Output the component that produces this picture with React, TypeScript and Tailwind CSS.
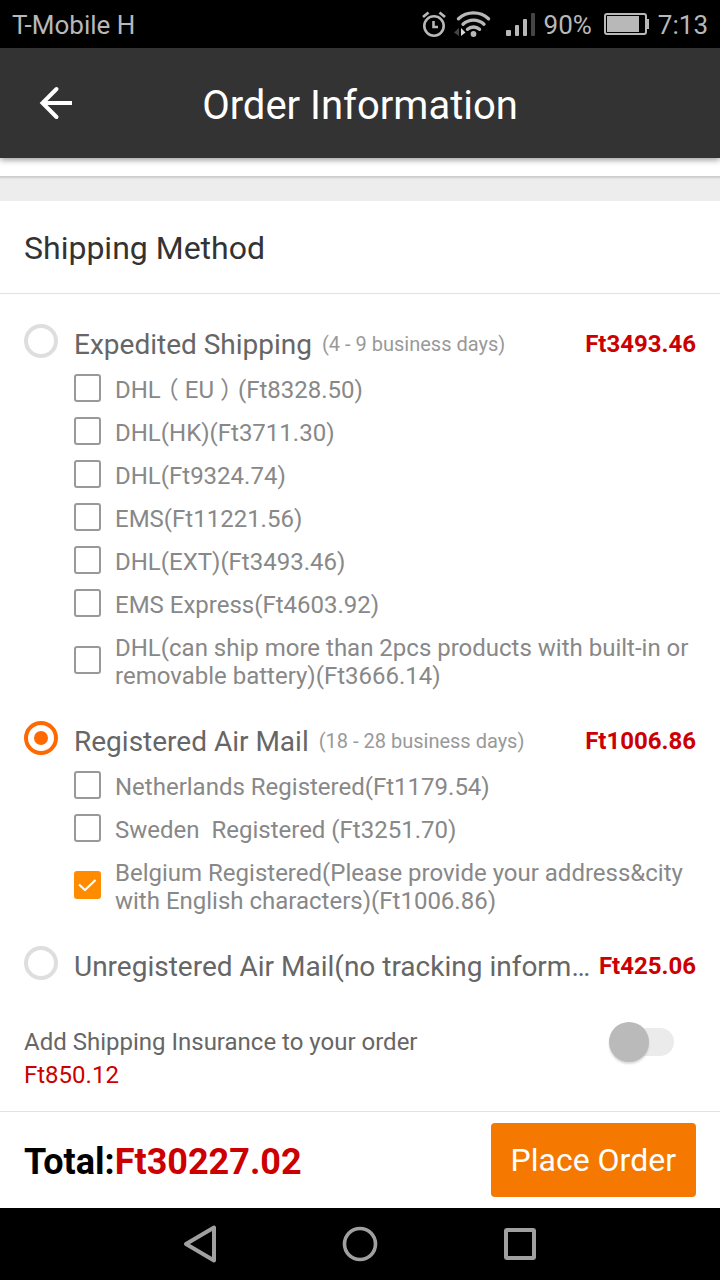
import React, { useState } from 'react';

interface Option {
  id: string;
  label: string;
}

interface Method {
  id: string;
  name: string;
  days?: string;
  price: string;
  options: Option[];
}

const methods: Method[] = [
  {
    id: 'expedited',
    name: 'Expedited Shipping',
    days: '(4 - 9 business days)',
    price: 'Ft3493.46',
    options: [
      { id: 'dhl-eu', label: 'DHL（EU）(Ft8328.50)' },
      { id: 'dhl-hk', label: 'DHL(HK)(Ft3711.30)' },
      { id: 'dhl', label: 'DHL(Ft9324.74)' },
      { id: 'ems', label: 'EMS(Ft11221.56)' },
      { id: 'dhl-ext', label: 'DHL(EXT)(Ft3493.46)' },
      { id: 'ems-express', label: 'EMS Express(Ft4603.92)' },
      {
        id: 'dhl-battery',
        label: 'DHL(can ship more than 2pcs products with built-in or removable battery)(Ft3666.14)',
      },
    ],
  },
  {
    id: 'registered',
    name: 'Registered Air Mail',
    days: '(18 - 28 business days)',
    price: 'Ft1006.86',
    options: [
      { id: 'netherlands', label: 'Netherlands Registered(Ft1179.54)' },
      { id: 'sweden', label: 'Sweden  Registered (Ft3251.70)' },
      {
        id: 'belgium',
        label: 'Belgium Registered(Please provide your address&city with English characters)(Ft1006.86)',
      },
    ],
  },
  {
    id: 'unregistered',
    name: 'Unregistered Air Mail(no tracking inform…',
    price: 'Ft425.06',
    options: [],
  },
];

// Full-width parentheses sit in the middle of their cell
const OptionLabel: React.FC<{ text: string }> = ({ text }) => (
  <>
    {text.split(/([（）])/).map((part, i) =>
      part === '（' || part === '）' ? (
        <span key={i} className="inline-block w-6 text-center [font-feature-settings:'halt']">
          {part}
        </span>
      ) : (
        part
      )
    )}
  </>
);

const StatusBar: React.FC = () => (
  <div className="flex h-12 items-center justify-between bg-black px-3 pt-[2px] text-[26px] leading-8 text-[#b8b8b8]">
    <span>T-Mobile H</span>
    <div className="flex items-center gap-2">
      {/* Alarm */}
      <svg className="-mt-[2px]" width="24" height="26" viewBox="0 0 24 26" fill="none" stroke="#b8b8b8">
        <circle cx="12" cy="15" r="9.7" strokeWidth="2.6" />
        <path d="M1 6 6.500 1.500M23 6 17.500 1.500" strokeWidth="2.8" />
        <path d="M11.5 10v6H16" strokeWidth="2.6" />
      </svg>
      {/* Wifi */}
      <svg className="-mt-[2px]" width="38" height="26" viewBox="0 0 38 26" fill="none">
        <path d="M4.500 7.800a22 22 0 0 1 30 0" stroke="#b8b8b8" strokeWidth="3.4" strokeLinecap="round" />
        <path d="M9 13.200a15.500 15.500 0 0 1 21 0" stroke="#b8b8b8" strokeWidth="3.4" strokeLinecap="round" />
        <path d="M13.500 18.300a9 9 0 0 1 12 0" stroke="#b8b8b8" strokeWidth="3.4" strokeLinecap="round" />
        <circle cx="19.500" cy="23" r="2.900" fill="#b8b8b8" />
        <path d="M0 21.500 5 17v8z" fill="#444" />
        <path d="M7 17l4.500 4.500L7 25z" fill="#d8d8d8" />
      </svg>
      {/* Signal */}
      <svg className="-mt-[2px] ml-[6px]" width="30" height="26" viewBox="0 0 30 26" fill="#b8b8b8">
        <rect x="0" y="19" width="5" height="6" rx="1" />
        <rect x="9" y="14" width="4" height="11" rx="1" />
        <rect x="17" y="8" width="4" height="17" rx="1" />
        <rect x="25" y="2" width="4" height="23" rx="1" fill="#444" />
      </svg>
      <span className="mr-1">90%</span>
      {/* Battery */}
      <svg className="-mt-[2px]" width="46" height="24" viewBox="0 0 46 24">
        <rect x="1" y="2" width="41" height="20" rx="2" fill="none" stroke="#b8b8b8" strokeWidth="2" />
        <rect x="3" y="4" width="32" height="16" fill="#b8b8b8" />
        <path d="M42 7h3v10h-3z" fill="#b8b8b8" />
      </svg>
      <span>7:13</span>
    </div>
  </div>
);

const NavBar: React.FC = () => (
  <nav className="flex h-18 items-center justify-center gap-31 bg-black">
    <button type="button" aria-label="Back">
      <svg width="36" height="40" viewBox="0 0 36 40" fill="none" stroke="#a0a0a0" strokeWidth="4" strokeLinejoin="round">
        <path d="M32 3.500v33L4 20z" />
      </svg>
    </button>
    <button type="button" aria-label="Home">
      <svg width="36" height="40" viewBox="0 0 36 40" fill="none" stroke="#a0a0a0" strokeWidth="3.600">
        <circle cx="18" cy="20" r="15.500" />
      </svg>
    </button>
    <button type="button" aria-label="Recent apps">
      <svg width="36" height="40" viewBox="0 0 36 40" fill="none" stroke="#a0a0a0" strokeWidth="4">
        <rect x="4" y="6" width="28" height="28" rx="1" />
      </svg>
    </button>
  </nav>
);

const App: React.FC = () => {
  const [method, setMethod] = useState('registered');
  const [checked, setChecked] = useState<string[]>(['belgium']);
  const [insurance, setInsurance] = useState(false);

  const toggle = (id: string) => {
    setChecked((prev) => (prev.includes(id) ? prev.filter((c) => c !== id) : [...prev, id]));
  };

  return (
    <div className="flex min-h-screen flex-col bg-white font-[Roboto,'Noto_Sans_CJK_SC',sans-serif]">
      <StatusBar />

      {/* Header */}
      <header className="relative z-10 grid h-[110px] grid-cols-[80px_1fr_80px] items-center bg-[#333] text-white shadow-[0_2px_6px_rgba(0,0,0,0.4)]">
        <button type="button" aria-label="Go back" className="pt-[2px] pl-9">
          <svg width="40" height="40" viewBox="0 0 40 40" fill="none" stroke="#fff" strokeWidth="4">
            <path d="M36 19H6" />
            <path d="M20.500 5 6.500 19l14 14" strokeLinecap="round" />
          </svg>
        </button>
        <h1 className="pt-[6px] text-center text-[40px] leading-12">Order Information</h1>
      </header>

      <div className="h-[18px]" />
      <div className="h-[25px] bg-[#ededed] shadow-[inset_0_3px_2px_-1px_rgba(0,0,0,0.14)]" />

      {/* Shipping methods */}
      <main className="flex-1">
        <h2 className="border-b border-[#e2e2e2] px-6 pt-[25px] pb-[23px] text-[32px] leading-11 text-[#333]">
          Shipping Method
        </h2>

        <div className="flex flex-col gap-[23px] px-6 pt-[30px]">
          {methods.map((m) => (
            <section key={m.id}>
              <div className="flex items-start">
                <input
                  id={m.id}
                  type="radio"
                  name="method"
                  checked={method === m.id}
                  onChange={() => setMethod(m.id)}
                  className="grid size-[34px] shrink-0 appearance-none place-content-center rounded-full border-4 border-[#dedede] before:size-[14px] before:rounded-full checked:border-[#ff6a00] checked:before:bg-[#ff6a00]"
                />
                <label htmlFor={m.id} className="ml-4 flex min-w-0 flex-1 items-start text-[28px] leading-10 text-[#666]">
                  <span className="truncate pt-px">{m.name}</span>
                  {m.days && <span className="ml-[10px] shrink-0 text-[20px] text-[#999]">{m.days}</span>}
                </label>
                <span className="ml-2 text-[24px] leading-10 font-bold text-[#c00]">{m.price}</span>
              </div>

              {m.options.length > 0 && (
                <ul className="mt-1 pl-[50px]">
                  {m.options.map((o) => (
                    <li key={o.id} className="flex items-center">
                      <span className="mb-[6px] grid shrink-0">
                        <input
                          id={o.id}
                          type="checkbox"
                          checked={checked.includes(o.id)}
                          onChange={() => toggle(o.id)}
                          className="peer col-start-1 row-start-1 h-7 w-[27px] appearance-none rounded-[3px] border-2 border-[#999] checked:border-[#ff8c00] checked:bg-[#ff8c00]"
                        />
                        <svg
                          className="pointer-events-none invisible col-start-1 row-start-1 peer-checked:visible"
                          width="27"
                          height="28"
                          viewBox="0 0 27 28"
                          fill="none"
                          stroke="#fff"
                          strokeWidth="2.200"
                        >
                          <path d="M5 13.500l6 5.500L21.500 9" />
                        </svg>
                      </span>
                      <label htmlFor={o.id} className="ml-[14px] pt-[7px] pb-2 text-[24px] leading-7 whitespace-pre-wrap text-[#888]">
                        <OptionLabel text={o.label} />
                      </label>
                    </li>
                  ))}
                </ul>
              )}
            </section>
          ))}
        </div>

        {/* Insurance */}
        <div className="flex items-start justify-between pt-[39px] pr-[46px] pb-[19px] pl-6">
          <label htmlFor="insurance" className="text-[24px] leading-[33px] text-[#666]">
            Add Shipping Insurance to your order
            <span className="block text-[#c00]">Ft850.12</span>
          </label>
          <input
            id="insurance"
            type="checkbox"
            role="switch"
            checked={insurance}
            onChange={() => setInsurance(!insurance)}
            className="mt-[2px] flex h-7 w-[65px] appearance-none items-center rounded-full bg-[#ebebeb] bg-clip-content pl-5 before:-ml-5 before:size-10 before:shrink-0 before:rounded-full before:bg-[#bababa] before:shadow-[0_2px_2px_rgba(0,0,0,0.15)] checked:before:ml-1 checked:before:bg-[#ff8c00]"
          />
        </div>
      </main>

      {/* Footer */}
      <footer className="flex items-center justify-between border-t border-[#e2e2e2] px-6 py-[11px]">
        <p className="pt-1 text-[36px] leading-11 font-bold text-black">
          Total:<span className="text-[#c00]">Ft30227.02</span>
        </p>
        <button type="button" className="h-[74px] rounded-[4px] bg-[#f57900] px-5 text-[32px] text-white">
          Place Order
        </button>
      </footer>

      <NavBar />
    </div>
  );
};

export default App;
